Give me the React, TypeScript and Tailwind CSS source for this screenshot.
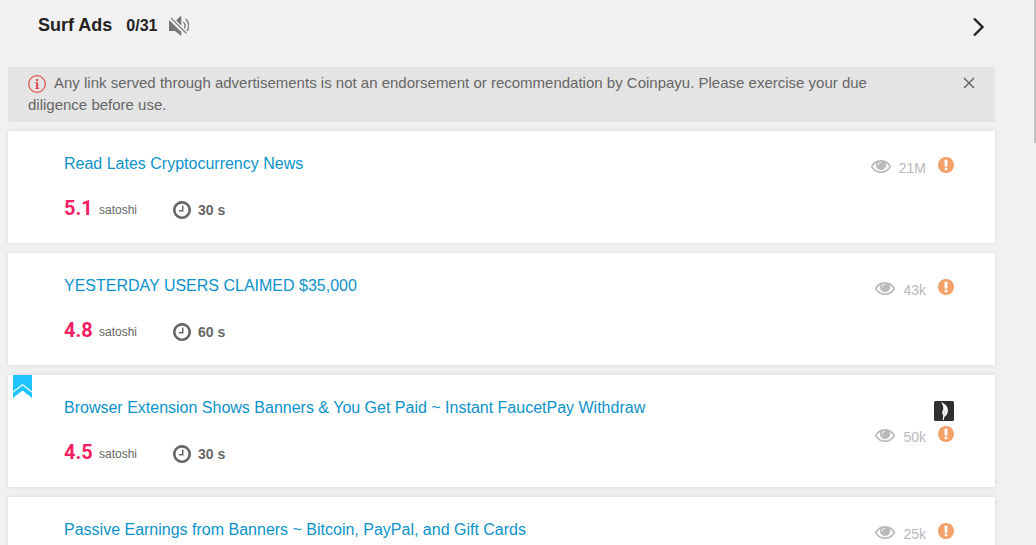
import type { ReactNode } from 'react';

type Ad = { title: string; price: string; seconds: number; views: string; pinned?: boolean };

const ads: Ad[] = [
  { title: 'Read Lates Cryptocurrency News', price: '5.1', seconds: 30, views: '21M' },
  { title: 'YESTERDAY USERS CLAIMED $35,000', price: '4.8', seconds: 60, views: '43k' },
  {
    title: 'Browser Extension Shows Banners & You Get Paid ~ Instant FaucetPay Withdraw',
    price: '4.5',
    seconds: 30,
    views: '50k',
    pinned: true,
  },
  { title: 'Passive Earnings from Banners ~ Bitcoin, PayPal, and Gift Cards', price: '4.5', seconds: 30, views: '25k' },
];

function Glyph({ className, box, children }: { className: string; box: string; children: ReactNode }) {
  return (
    <svg className={className} viewBox={box} fill="currentColor" aria-hidden="true">
      {children}
    </svg>
  );
}

const Eye = () => (
  <Glyph className="h-[13px] w-5 shrink-0" box="0 384 1792 1152">
    <path
      stroke="currentColor"
      strokeWidth="30"
      d="M1664 960q-152-236-381-353 61 104 61 225 0 185-131.5 316.5t-316.5 131.5-316.5-131.5-131.5-316.5q0-121 61-225-229 117-381 353 133 205 333.5 326.5t434.5 121.5 434.5-121.5 333.5-326.5zm-720-384q0-20-14-34t-34-14q-125 0-214.5 89.5t-89.5 214.5q0 20 14 34t34 14 34-14 14-34q0-86 61-147t147-61q20 0 34-14t14-34zm848 384q0 34-20 69-140 230-376.5 368.5t-499.5 138.5-499.5-139-376.5-368q-20-35-20-69t20-69q140-229 376.5-368t499.5-139 499.5 139 376.5 368q20 35 20 69z"
    />
  </Glyph>
);

const Warning = () => (
  <Glyph className="size-4" box="128 128 1536 1536">
    <path d="M896 128q209 0 385.5 103t279.5 279.5 103 385.5-103 385.5-279.5 279.5-385.5 103-385.5-103-279.5-279.5-103-385.5 103-385.5 279.5-279.5 385.5-103zm128 1247v-190q0-14-9-23.5t-22-9.5h-192q-13 0-23 10t-10 23v190q0 13 10 23t23 10h192q13 0 22-9.5t9-23.5zm-2-344l18-621q0-12-10-18-10-8-24-8h-220q-14 0-24 8-10 6-10 18l17 621q0 10 10 17.5t24 7.5h185q14 0 23.5-7.5t10.5-17.5z" />
  </Glyph>
);

const Clock = () => (
  <Glyph className="size-[18px]" box="128 128 1536 1536">
    <path d="M1024 544v448q0 14-9 23t-23 9h-320q-14 0-23-9t-9-23v-64q0-14 9-23t23-9h224v-352q0-14 9-23t23-9h64q14 0 23 9t9 23zm416 352q0-148-73-273t-198-198-273-73-273 73-198 198-73 273 73 273 198 198 273 73 273-73 198-198 73-273zm224 0q0 209-103 385.5t-279.5 279.5-385.5 103-385.5-103-279.5-279.5-103-385.5 103-385.5 279.5-279.5 385.5-103 385.5 103 279.5 279.5 103 385.5z" />
  </Glyph>
);

const Muted = () => (
  <svg className="h-5 w-5" viewBox="0 0 20 20" fill="none" aria-hidden="true">
    <path d="M0 4 12.300 16v4L6 15H0z" fill="#757575" />
    <path d="M7.200 4.600 10.800.6h1.500v9z" fill="#757575" />
    <path d="M2 2 17.500 17.500" stroke="#808080" strokeWidth="1.300" />
    <path d="M14.400 6c1.800 1.900 2 4.300 1 6.300M16.600 2.800c3.300 3.400 4 8.200 1.400 12.400" stroke="#858585" strokeWidth="1.500" />
  </svg>
);

const Ribbon = () => (
  <svg className="absolute top-0 left-[5px] h-[23px] w-[19px]" viewBox="0 0 19 23" aria-hidden="true">
    <path d="M0 0h19v23l-9.500-7.500L0 23z" fill="#1fc4ff" />
    <path d="m0 17.200 9.500-7.500 9.500 7.500" fill="none" stroke="#d5f4ff" strokeWidth="1.400" />
  </svg>
);

const Feather = () => (
  <svg className="h-5 w-5" viewBox="0 0 20 20" aria-hidden="true">
    <rect width="20" height="20" rx="1.500" fill="#303030" />
    <path d="M7 1.300c4.200 1.300 7 4.500 6.900 8.300-.1 3.500-1.900 5.600-3.600 6.400L9.700 19H8.700l.5-4.200c-1.300-2.200-1.100-4-.1-5.700C9.900 6.500 8.800 3.500 7 1.300z" fill="#fff" />
    <path d="M10.900 8.500c.2 2.500-.4 4.300-1.500 6.500" fill="none" stroke="#aaa" strokeWidth=".6" />
  </svg>
);

function AdCard({ ad }: { ad: Ad }) {
  return (
    <article className="relative flex justify-between bg-white pt-[21px] pr-[41px] pb-[19px] pl-14 shadow-[0_0_5px_rgba(0,0,0,0.1)]">
      {ad.pinned && <Ribbon />}
      <div className="min-w-0">
        <h2 className="text-base leading-6">
          <a href="#ad" className="text-[#0c93cb]">{ad.title}</a>
        </h2>
        <div className="mt-4 flex h-8 items-center">
          <span className="w-[35px] font-['Roboto',sans-serif] text-xl leading-8 font-bold text-[#f51d63]">
            {ad.price}
          </span>
          <span className="w-[74px] pt-1 text-xs leading-4">satoshi</span>
          <span className="flex items-center gap-[7px] pt-1 text-sm leading-4 font-bold">
            <Clock />
            {ad.seconds} s
          </span>
        </div>
      </div>
      <div className="flex flex-col items-end pt-[5px]">
        {ad.pinned && (
          <button type="button" aria-label="Advertiser" className="mb-[5px]">
            <Feather />
          </button>
        )}
        <div className="flex items-start gap-3 text-[#b9b9b9]">
          <span className="flex items-center gap-2 text-sm leading-4">
            <Eye />
            <span className="pt-[3px]">{ad.views}</span>
          </span>
          <button type="button" aria-label="Report ad" className="text-[#f4a069]">
            <Warning />
          </button>
        </div>
      </div>
    </article>
  );
}

export default function App() {
  return (
    <div className="flex h-screen bg-[#f1f1f1] font-['Liberation_Sans',Arial,sans-serif] text-[#666]">
      <main className="min-w-0 flex-1 overflow-y-auto pr-[39px] pl-2 [scrollbar-width:none]">
        <header className="flex h-[67px] items-start justify-between pt-3 pr-2 pl-[30px] text-[#222]">
          <div className="flex items-center">
            <h1 className="pb-0.5 text-lg leading-[26px] font-bold">Surf Ads</h1>
            <span className="ml-[14px] text-base leading-7 font-bold">0/31</span>
            <button type="button" aria-label="Unmute" className="ml-3">
              <Muted />
            </button>
          </div>
          <button type="button" aria-label="Next" className="mt-[5px]">
            <svg className="h-5 w-4" viewBox="0 0 16 20" fill="none" stroke="currentColor" strokeWidth="2.400" aria-hidden="true">
              <path d="m3 1.500 8.500 8.500L3 18.500" />
            </svg>
          </button>
        </header>
        <section className="flex items-start justify-between bg-[#e4e4e4] px-5 pt-[5px] pb-[6px]">
          <p className="max-w-[860px] text-[15px] leading-[22px]">
            <svg className="mr-2 inline-block size-[18px] align-[-5px] text-[#e05252]" viewBox="0 0 18 18" aria-hidden="true">
              <circle cx="9" cy="9" r="8.300" fill="none" stroke="currentColor" strokeWidth="1.200" />
              <path d="M8 4h2.200v2H8zM7.200 7.300h3V13H11v1H7.200v-1H8V8.300h-.8z" fill="currentColor" />
            </svg>
            Any link served through advertisements is not an endorsement or recommendation by Coinpayu. Please exercise your due
            diligence before use.
          </p>
          <button type="button" aria-label="Dismiss" className="mt-[5px]">
            <svg className="size-3" viewBox="0 0 12 12" fill="none" stroke="currentColor" strokeWidth="1.500" aria-hidden="true">
              <path d="m1 1 10 10M11 1 1 11" />
            </svg>
          </button>
        </section>
        <div className="mt-[9px] flex flex-col gap-[10px]">
          {ads.map((ad) => (
            <AdCard key={ad.title} ad={ad} />
          ))}
        </div>
      </main>
      <div className="w-[2px] shrink-0" aria-hidden="true">
        <div className="h-[143px] bg-[#c1c1c1]" />
      </div>
    </div>
  );
}
